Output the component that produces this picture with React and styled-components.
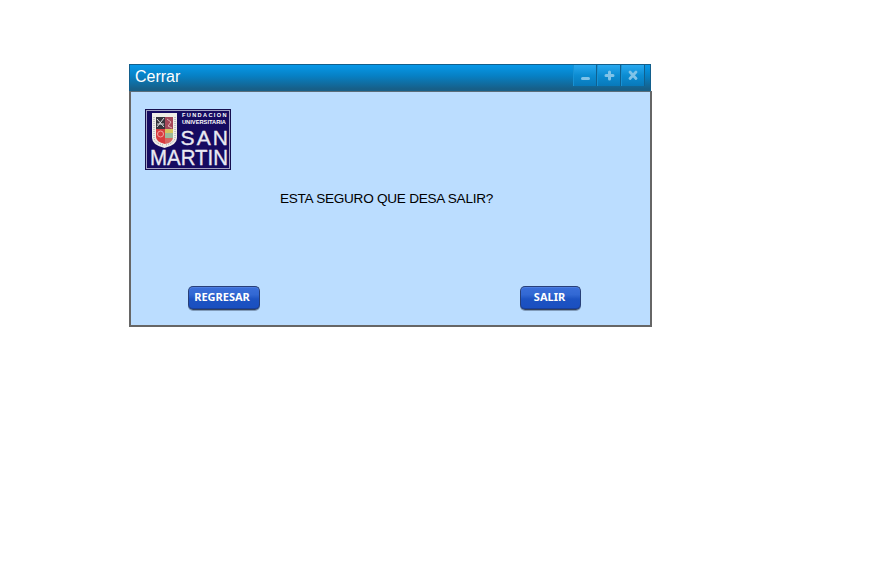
import React from "react";
import styled, { createGlobalStyle } from "styled-components";

const GlobalStyle = createGlobalStyle`
  body { margin: 0; background: #fff; }
  * { box-sizing: border-box; }
`;

const Page = styled.main`
  width: 891px;
  height: 567px;
  padding: 64px 0 0 129px;
  font-family: "Liberation Sans", Arial, sans-serif;
`;

const Dialog = styled.section`
  width: 523px;
`;

const TitleBar = styled.header`
  display: flex;
  justify-content: space-between;
  width: 522px;
  height: 27px;
  padding-right: 5px;
  border: 1px solid #135f8c;
  border-width: 1px 1px 0;
  background: linear-gradient(#0798e8, #0780c4 42%, #175f88 92%, #175f88);
`;

const Title = styled.h1`
  margin: 0;
  padding-left: 5px;
  font-size: 16px;
  font-weight: 400;
  line-height: 23px;
  color: #fff;
`;

const WindowControls = styled.div`
  display: flex;
  gap: 1px;
  height: 21px;
  background: #10608f;
  border-right: 1px solid #10608f;
`;

const ControlButton = styled.button`
  display: flex;
  width: 23px;
  height: 21px;
  padding: 0;
  border: 0;
  border-left: 1px solid #1792d5;
  background: linear-gradient(#28a9f0, #0c8cd2 50%, #0879ba);
  color: #80c3e8;
`;

const Content = styled.div`
  display: flex;
  flex-direction: column;
  height: 236px;
  border: 2px solid #666;
  border-top: 1px solid #5b6e7b;
  background: #bbddff;
`;

const Logo = styled.svg`
  display: block;
  flex: none;
  overflow: visible;
  margin: 17px 0 0 14px;
`;

const Message = styled.p`
  margin: 20px 0 0 149px;
  font-size: 13.6px;
  line-height: 17px;
  letter-spacing: -0.27px;
  color: #000;
`;

const Actions = styled.footer`
  display: flex;
  justify-content: space-between;
  margin: 79px 69px 0 57px;
`;

const ActionButton = styled.button`
  width: ${(p) => p.$width}px;
  height: 24px;
  padding: 0 ${(p) => p.$inset}px 3px 0;
  border: 1px solid #283f78;
  border-bottom-color: #34435f;
  border-radius: 5px;
  background: linear-gradient(#3b6fda, #3268d3 35%, #1d53c2 55%, #1a4fc0);
  box-shadow: inset 0 1px 0 #4d7de0, inset 0 -1px 0 #183f9b, 0 1px 0 rgba(60, 75, 100, 0.45);
  font: 700 11px/20px "Noto Sans", "Open Sans", sans-serif;
  white-space: nowrap;
  color: #fff;
`;

function UniversityLogo() {
  return (
    <Logo width="86" height="61" viewBox="0 0 86 61" role="img" aria-label="Fundación Universitaria San Martín">
      <rect width="86" height="61" fill="#17104f" />
      <rect x="1.5" y="1.5" width="83" height="58" fill="#160b60" stroke="#a5a4c4" />
      <path d="M7 4H32V29Q32 36 19.500 39Q7 36 7 29Z" fill="#f0eee7" />
      <path d="M11 8H20V20H11Z" fill="#36343b" />
      <path d="M12 10l7 8M19 9l-7 9M12 15h7" stroke="#dedddf" />
      <path d="M20 8H28V20H20Z" fill="#a64759" />
      <path d="M22 10l4 3-3 4 4 2" fill="none" stroke="#deb1b4" />
      <path d="M11 20H20V35Q11 33 11 28Z" fill="#d93b3e" />
      <circle cx="15.500" cy="25" r="3" fill="none" stroke="#f0a6a3" />
      <path d="M20 20H28V24H20Z" fill="#d4c45e" />
      <path d="M20 24H28V29H20Z" fill="#9bb99a" />
      <path d="M20 29H28Q27 34 20 35Z" fill="#d66560" />
      <path d="M9 8V29Q10 34 18 36M30 8V29Q29 34 21 36" fill="none" stroke="#999aa5" strokeDasharray="1 1" />
      <g fill="#fff" fontFamily="Liberation Sans, Arial, sans-serif">
        <text x="37" y="8" fontSize="5.600" fontWeight="700" textLength="44.500">FUNDACION</text>
        <text x="37" y="14.500" fontSize="6" fontWeight="700" textLength="44" lengthAdjust="spacingAndGlyphs">UNIVERSITARIA</text>
        <g fill="#e9e9f2" stroke="#e9e9f2" strokeWidth="0.350">
          <text x="35.500" y="36" fontSize="21" textLength="47.500" lengthAdjust="spacing">SAN</text>
          <text x="5" y="56" fontSize="22.500" textLength="78" lengthAdjust="spacingAndGlyphs">MARTIN</text>
        </g>
      </g>
    </Logo>
  );
}

function ControlIcon({ kind }) {
  return (
    <svg width="22" height="21" viewBox="0 0 22 21" fill="none" stroke="currentColor" strokeWidth="3">
      {kind === "minimize" && <path d="M8.500 13.500H14.500" strokeLinecap="round" />}
      {kind === "maximize" && <path d="M8 10.500H15M11.500 7V14" strokeLinecap="round" />}
      {kind === "close" && <path d="M8 7L14 13.500M14 7L8 13.500" strokeWidth="2.800" strokeLinecap="round" />}
    </svg>
  );
}

export default function App() {
  return (
    <>
      <GlobalStyle />
      <Page>
        <Dialog role="dialog" aria-label="Cerrar">
          <TitleBar>
            <Title>Cerrar</Title>
            <WindowControls>
              <ControlButton aria-label="Minimizar"><ControlIcon kind="minimize" /></ControlButton>
              <ControlButton aria-label="Maximizar"><ControlIcon kind="maximize" /></ControlButton>
              <ControlButton aria-label="Cerrar ventana"><ControlIcon kind="close" /></ControlButton>
            </WindowControls>
          </TitleBar>
          <Content>
            <UniversityLogo />
            <Message>ESTA SEGURO QUE DESA SALIR?</Message>
            <Actions>
              <ActionButton $width={72} $inset={4}>REGRESAR</ActionButton>
              <ActionButton $width={61} $inset={2}>SALIR</ActionButton>
            </Actions>
          </Content>
        </Dialog>
      </Page>
    </>
  );
}
